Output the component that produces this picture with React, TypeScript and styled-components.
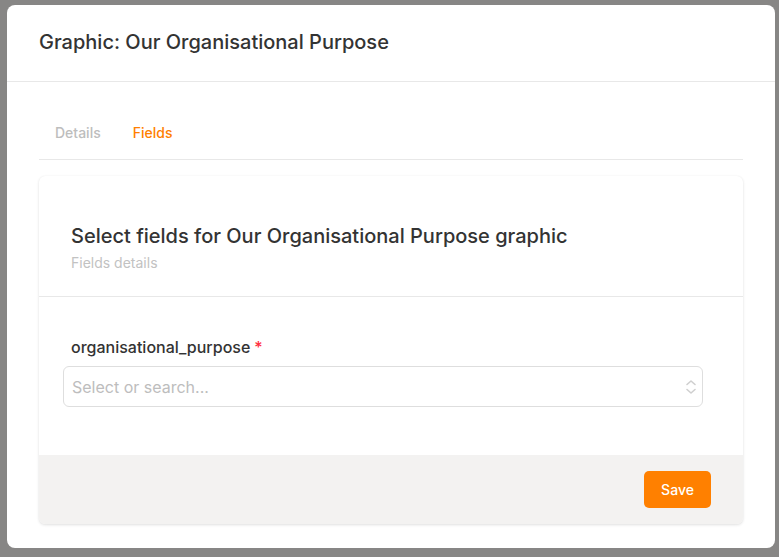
import React from "react";
import styled, { createGlobalStyle } from "styled-components";

const Global = createGlobalStyle`
  html, body { margin: 0; padding: 0; }
  body {
    font-family: Inter, "Noto Sans", "Liberation Sans", sans-serif;
    background: #878685;
    width: 779px;
    height: 557px;
    overflow: hidden;
  }
  * { box-sizing: border-box; }
`;

const Backdrop = styled.div`
  width: 779px;
  height: 557px;
  background: #878685;
  padding: 5px 4px 9px 7px;
  display: flex;
`;

const Modal = styled.div`
  width: 768px;
  height: 543px;
  background: #fff;
  border-radius: 8px;
  display: flex;
  flex-direction: column;
  overflow: hidden;
`;

const ModalHeader = styled.div`
  height: 77px;
  padding: 0 32px 2px;
  display: flex;
  align-items: center;
  border-bottom: 1px solid #e8e8e8;
  flex-shrink: 0;
`;

const ModalTitle = styled.h2`
  margin: 0;
  font-size: 20px;
  font-weight: 500;
  color: #333;
  line-height: 24px;
`;

const ModalBody = styled.div`
  padding: 0 32px 24px;
  display: flex;
  flex-direction: column;
  flex: 1;
`;

const Tabs = styled.div`
  display: flex;
  gap: 32px;
  padding: 42px 16px 17px;
  border-bottom: 1px solid #e8e8e8;
  margin-bottom: 16px;
`;

const Tab = styled.div<{ $active?: boolean }>`
  font-size: 14px;
  font-weight: 500;
  line-height: 18px;
  color: ${(p) => (p.$active ? "#ff8000" : "#bdbdbd")};
`;

const Card = styled.div`
  flex: 1;
  border-radius: 6px;
  background: #fff;
  box-shadow: 0 1px 3px rgba(0, 0, 0, 0.12), 0 0 1px rgba(0, 0, 0, 0.06);
  display: flex;
  flex-direction: column;
  overflow: hidden;
`;

const CardHeader = styled.div`
  padding: 48px 32px 24px;
  border-bottom: 1px solid #e8e8e8;
`;

const CardTitle = styled.h3`
  margin: 0;
  font-size: 20px;
  font-weight: 500;
  color: #333;
  line-height: 24px;
`;

const CardSubtitle = styled.div`
  margin-top: 6px;
  font-size: 14px;
  color: #c2c2c2;
  line-height: 18px;
`;

const CardBody = styled.div`
  padding: 40px 40px 48px 24px;
  flex: 1;
`;

const Label = styled.div`
  padding-left: 8px;
  font-size: 16px;
  font-weight: 500;
  color: #333;
  line-height: 20px;
  margin-bottom: 9px;
`;

const Required = styled.span`
  color: #ff2d3d;
  margin-left: 4px;
`;

const SelectBox = styled.div`
  width: 640px;
  height: 41px;
  border: 1px solid #dedede;
  border-radius: 6px;
  display: flex;
  align-items: center;
  justify-content: space-between;
  padding: 0 4px 0 8px;
`;

const Placeholder = styled.span`
  font-size: 16px;
  color: #bdbdbd;
`;

const CardFooter = styled.div`
  background: #f3f2f1;
  height: 69px;
  display: flex;
  align-items: center;
  justify-content: flex-end;
  padding: 0 32px;
  flex-shrink: 0;
`;

const SaveButton = styled.button`
  height: 37px;
  width: 67px;
  border: none;
  border-radius: 5px;
  background: #ff8000;
  color: #fff;
  font-family: inherit;
  font-size: 14px;
  font-weight: 500;
  cursor: pointer;
`;

const Chevrons = () => (
  <svg width="14" height="18" viewBox="0 0 14 18" fill="none" stroke="#cfcfcf" strokeWidth="1.6" strokeLinecap="round" strokeLinejoin="round">
    <path d="M3 6.5 L7 3 L11 6.5" />
    <path d="M3 11.5 L7 15 L11 11.5" />
  </svg>
);

export default function App() {
  return (
    <>
      <Global />
      <Backdrop>
        <Modal>
          <ModalHeader>
            <ModalTitle>Graphic: Our Organisational Purpose</ModalTitle>
          </ModalHeader>
          <ModalBody>
            <Tabs>
              <Tab>Details</Tab>
              <Tab $active>Fields</Tab>
            </Tabs>
            <Card>
              <CardHeader>
                <CardTitle>Select fields for Our Organisational Purpose graphic</CardTitle>
                <CardSubtitle>Fields details</CardSubtitle>
              </CardHeader>
              <CardBody>
                <Label>
                  organisational_purpose<Required>*</Required>
                </Label>
                <SelectBox>
                  <Placeholder>Select or search...</Placeholder>
                  <Chevrons />
                </SelectBox>
              </CardBody>
              <CardFooter>
                <SaveButton>Save</SaveButton>
              </CardFooter>
            </Card>
          </ModalBody>
        </Modal>
      </Backdrop>
    </>
  );
}
